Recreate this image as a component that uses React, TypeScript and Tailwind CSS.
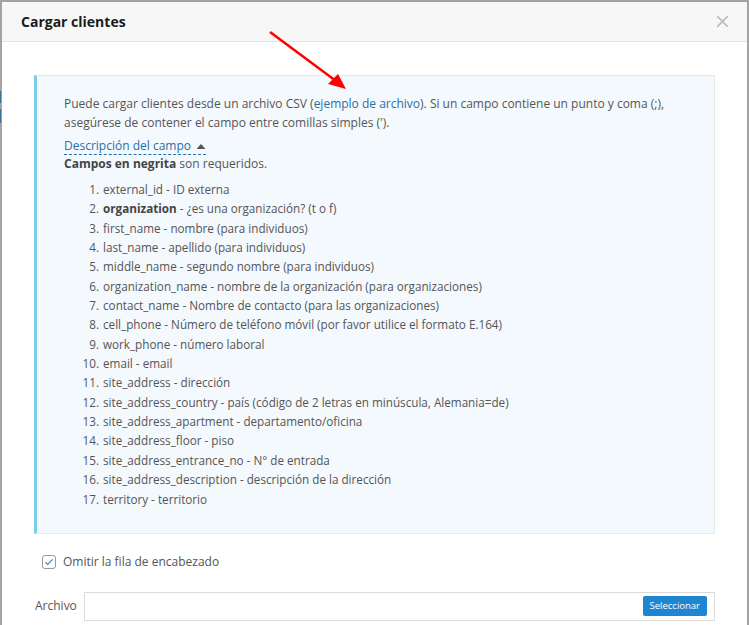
import { X } from 'lucide-react'

const fields: { name: string; desc: string; bold?: boolean }[] = [
  { name: 'external_id', desc: 'ID externa' },
  { name: 'organization', desc: '¿es una organización? (t o f)', bold: true },
  { name: 'first_name', desc: 'nombre (para individuos)' },
  { name: 'last_name', desc: 'apellido (para individuos)' },
  { name: 'middle_name', desc: 'segundo nombre (para individuos)' },
  { name: 'organization_name', desc: 'nombre de la organización (para organizaciones)' },
  { name: 'contact_name', desc: 'Nombre de contacto (para las organizaciones)' },
  { name: 'cell_phone', desc: 'Número de teléfono móvil (por favor utilice el formato E.164)' },
  { name: 'work_phone', desc: 'número laboral' },
  { name: 'email', desc: 'email' },
  { name: 'site_address', desc: 'dirección' },
  { name: 'site_address_country', desc: 'país (código de 2 letras en minúscula, Alemania=de)' },
  { name: 'site_address_apartment', desc: 'departamento/oficina' },
  { name: 'site_address_floor', desc: 'piso' },
  { name: 'site_address_entrance_no', desc: 'N° de entrada' },
  { name: 'site_address_description', desc: 'descripción de la dirección' },
  { name: 'territory', desc: 'territorio' },
]

export default function App() {
  return (
    <div className="relative h-[625px] w-[749px] overflow-hidden bg-[#a3a3a3] pl-[2px] pt-[2px] font-['Open_Sans',sans-serif] text-[12px] text-[#555]">
      {/* bits of the page behind the backdrop */}
      <div className="absolute left-0 top-[91px] h-[12px] w-[1px] bg-[#3f6f92]" />
      <div className="absolute left-0 top-[109px] h-[14px] w-[1px] bg-[#3f6f92]" />

      <div className="flex h-[640px] w-[745px] flex-col bg-white">
        {/* Header */}
        <div className="flex h-[40px] items-center justify-between border-b border-[#e3e3e3] bg-[#f7f7f7] pl-[19px] pr-[15px]">
          <h3 className="text-[14px] font-bold text-[#1b1b1b]">Cargar clientes</h3>
          <X className="h-[19px] w-[19px] text-[#b8b8b8]" strokeWidth={2.2} />
        </div>

        {/* Body */}
        <div className="px-[32px] pt-[33px]">
          <div className="border border-l-[3px] border-[#e2eaee] border-l-[#7dcde6] bg-[#f4f9fd] pb-[24px] pl-[27px] pr-[20px] pt-[18px]">
            <p className="leading-[19px]">
              Puede cargar clientes desde un archivo CSV (<span className="text-[#2a6ea8]">ejemplo de archivo</span>). Si un campo contiene un punto y coma (;),
              asegúrese de contener el campo entre comillas simples (').
            </p>
            <div className="mt-[6px] flex">
              <span className="flex items-center gap-[5px] border-b border-dashed border-[#2a6ea8] leading-[16px] text-[#2a6ea8]">
                Descripción del campo
                <svg width="10" height="7" viewBox="0 0 10 7">
                  <path d="M0.5 6 L5 1 L9.5 6 Z" fill="#555" />
                </svg>
              </span>
            </div>
            <p className="leading-[17px]">
              <strong className="font-bold text-[#444]">Campos en negrita</strong> son requeridos.
            </p>
            <ol className="mt-[8px] text-[11.7px]">
              {fields.map((f, i) => (
                <li key={f.name} className="flex leading-[19.35px]">
                  <span className="w-[39px] shrink-0 pr-[4px] text-right">{i + 1}.</span>
                  <span>
                    {f.bold ? <strong className="font-bold text-[#444]">{f.name}</strong> : f.name} - {f.desc}
                  </span>
                </li>
              ))}
            </ol>
          </div>

          <label className="mt-[19px] flex items-center gap-[7px] pl-[8px]">
            <span className="flex h-[14px] w-[14px] items-center justify-center rounded-[3px] border border-[#9a9a9a] bg-white">
              <svg width="10" height="8" viewBox="0 0 10 8">
                <path d="M1.5 4.2 L3.8 6.4 L8.6 1.4" stroke="#3a8ad0" strokeWidth="1.2" fill="none" />
              </svg>
            </span>
            <span className="text-[12px] text-[#555]">Omitir la fila de encabezado</span>
          </label>

          <div className="mt-[21px] flex items-center gap-[7px] pl-[1px]">
            <span className="text-[12px] text-[#555]">Archivo</span>
            <div className="flex h-[29px] flex-1 items-center justify-end border border-[#dcdcdc] bg-white pr-[7px]">
              <button className="h-[20px] rounded-[2px] bg-[#1e86d0] px-[7px] text-[9.5px] leading-[20px] text-white">
                Seleccionar
              </button>
            </div>
          </div>
        </div>
      </div>

      {/* annotation arrow */}
      <svg className="absolute left-[262px] top-[26px]" width="95" height="72" viewBox="0 0 95 72">
        <line x1="8" y1="6" x2="74" y2="55" stroke="#f00" strokeWidth="2.5" />
        <path d="M84 63 L66 58 L76 48 Z" fill="#f00" />
      </svg>
    </div>
  )
}
